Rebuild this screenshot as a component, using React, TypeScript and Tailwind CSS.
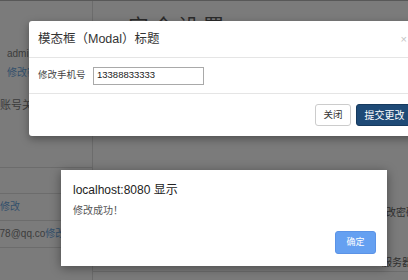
export default function App() {
  return (
    <div className="relative h-[280px] w-[408px] overflow-hidden bg-[#7b7b7b] font-['Liberation_Sans','Noto_Sans_CJK_SC',sans-serif]">
      {/* page behind the backdrop */}
      <div className="flex h-full border-t border-[#585858]">
        <div className="flex w-[93px] shrink-0 flex-col border-r border-[#6c6c6c] text-[10px] leading-[14px]">
          <div className="h-[46px]" />
          <div className="pl-[7px] text-[#3b3b3b]">admin</div>
          <div className="mt-[5px] pl-[7px] text-[#33506c]">修改密码</div>
          <div className="mt-[18px] whitespace-nowrap text-[11px] text-[#3b3b3b]">账号关联</div>
          <div className="h-[56px] border-b border-[#6c6c6c]" />
          <div className="h-[26px] border-b border-[#6c6c6c]" />
          <div className="flex h-[27px] items-center border-b border-[#6c6c6c]">
            <span className="whitespace-nowrap text-[#33506c]">修改</span>
          </div>
          <div className="flex h-[27px] items-center border-b border-[#6c6c6c]">
            <span className="-ml-[6px] whitespace-nowrap text-[#3b3b3b]">
              678@qq.co<span className="text-[#33506c]">修改</span>
            </span>
          </div>
        </div>
        <div className="flex flex-1 flex-col">
          <div className="pl-[35px] pt-[13px] text-[21px] leading-[26px] tracking-[4px] text-[#2b2b2b]">
            安全设置
          </div>
          <div className="mt-[159px] flex h-[27px] items-center justify-end text-[10px] text-[#2f2f2f]">
            <span className="-mr-[8px] whitespace-nowrap">修改密码</span>
          </div>
          <div className="flex h-[46px] items-end justify-end border-b border-[#6c6c6c] pb-[2px] text-[10px] leading-[12px] text-[#2f2f2f]">
            <span className="-mr-[4px] whitespace-nowrap">服务器</span>
          </div>
        </div>
      </div>

      {/* bootstrap modal */}
      <div className="absolute left-[29px] top-[21px] w-[390px] rounded-[3px] bg-white shadow-[0_3px_8px_rgba(0,0,0,0.35)]">
        <div className="flex h-[37px] items-center justify-between border-b border-[#e5e5e5] pl-[9px] pr-[12px]">
          <span className="text-[12.5px] text-[#333]">模态框（Modal）标题</span>
          <span className="text-[11px] text-[#c4c4c4]">×</span>
        </div>
        <div className="flex h-[36px] items-center border-b border-[#e5e5e5] pl-[9px] text-[9.5px] text-[#444]">
          <span className="w-[55px]">修改手机号</span>
          <div className="flex h-[18px] w-[111px] items-center border border-[#a9a9a9] pl-[3px] text-[9.5px] text-[#222]">
            13388833333
          </div>
        </div>
        <div className="flex h-[42px] items-center justify-end gap-[5px] pr-[6px]">
          <button className="h-[22px] w-[36px] rounded-[3px] border border-[#cccccc] bg-white text-[9.5px] text-[#333]">
            关闭
          </button>
          <button className="h-[22px] w-[57px] rounded-[3px] border border-[#163a5e] bg-[#1e4a76] text-[10px] text-white">
            提交更改
          </button>
        </div>
      </div>

      {/* browser alert */}
      <div className="absolute left-[61px] top-[170px] flex h-[96px] w-[326px] flex-col bg-white pl-[12px] pr-[11px] pt-[11px] shadow-[0_2px_10px_rgba(0,0,0,0.4)]">
        <div className="text-[12px] leading-[18px] text-[#222]">localhost:8080 显示</div>
        <div className="mt-[5px] text-[10px] leading-[14px] text-[#555]">修改成功！</div>
        <div className="mt-auto mb-[12px] flex justify-end">
          <button className="h-[23px] w-[41px] rounded-[3px] border border-[#5b93e6] bg-[#65a0f1] text-[9px] text-white">
            确定
          </button>
        </div>
      </div>
    </div>
  );
}
